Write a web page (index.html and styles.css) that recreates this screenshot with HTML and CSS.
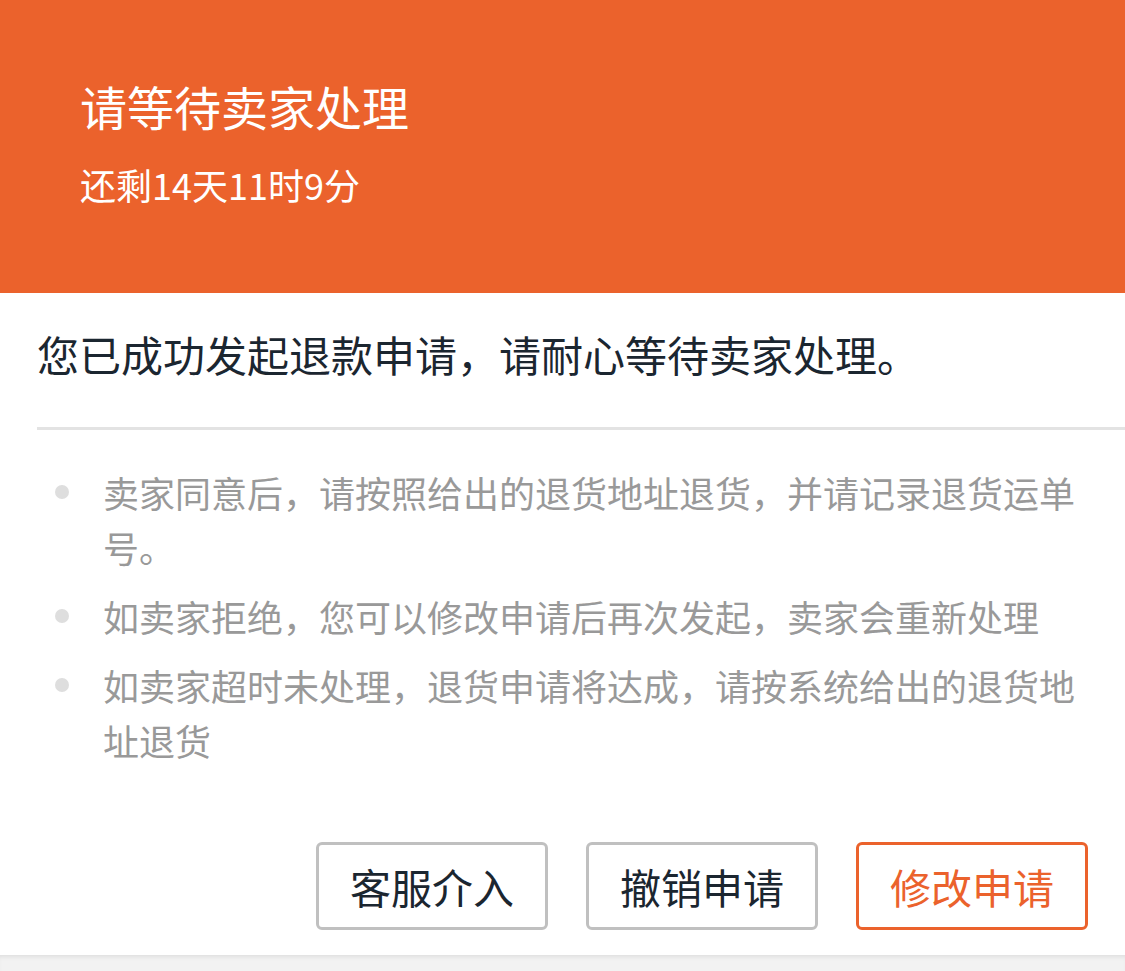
FILE: index.html
```html
<!doctype html>
<html lang="zh-CN">
<head>
 <meta charset="UTF-8">
 <meta name="viewport" content="width=device-width, initial-scale=1.0">
 <title>退款详情</title>
 <link rel="stylesheet" href="styles.css">
</head>
<body>
<div class="page">
 <div class="status">
  <h1 class="status-title">请等待卖家处理</h1>
  <p class="status-time">还剩14天11时9分</p>
 </div>
 <div class="card">
  <p class="card-msg">您已成功发起退款申请，请耐心等待卖家处理。</p>
  <ul class="tips">
   <li>卖家同意后，请按照给出的退货地址退货，并请记录退货运单号。</li>
   <li>如卖家拒绝，您可以修改申请后再次发起，卖家会重新处理</li>
   <li>如卖家超时未处理，退货申请将达成，请按系统给出的退货地址退货</li>
  </ul>
  <div class="actions">
   <a href="#" class="btn">客服介入</a>
   <a href="#" class="btn">撤销申请</a>
   <a href="#" class="btn btn-primary">修改申请</a>
  </div>
 </div>
 <div class="footer"></div>
</div>
</body>
</html>
```

FILE: styles.css
```css
*{
 margin:0;
 padding:0;
 box-sizing:border-box;
}
html,body{
 height:100%;
 overflow:hidden;
}
body{
 font-family:"Noto Sans CJK SC","Noto Sans",sans-serif;
 background:#f2f2f2;
 color:#1b2630;
}
.status{
 height:293px;
 background:#eb622c;
 color:#fff;
 padding:76px 0 0 80px;
}
.status-title{
 font-size:47px;
 font-weight:normal;
 line-height:60px;
}
.status-time{
 margin-top:24px;
 font-size:36px;
 line-height:48px;
}
.card{
 background:#fff;
 padding-left:37px;
}
.card-msg{
 font-size:42px;
 line-height:60px;
 padding:31px 0 43px;
 border-bottom:3px solid #e3e3e3;
}
.tips{
 list-style:none;
 padding:35px 37px 74px 0;
}
.tips li{
 position:relative;
 padding-left:66px;
 font-size:36px;
 line-height:55px;
 color:#999;
 margin-bottom:14px;
}
.tips li:last-child{
 margin-bottom:0;
}
.tips li:before{
 content:'';
 position:absolute;
 left:18px;
 top:20px;
 width:14px;
 height:14px;
 border-radius:50%;
 background:#dedede;
}
.actions{
 display:flex;
 justify-content:flex-end;
 gap:38px;
 padding:0 37px 25px 0;
}
.btn{
 display:flex;
 align-items:center;
 justify-content:center;
 width:232px;
 height:88px;
 border:3px solid #c0c0c0;
 border-radius:6px;
 font-size:41px;
 color:#1b2630;
 text-decoration:none;
}
.btn-primary{
 border-color:#eb622c;
 color:#eb622c;
}
.footer{
 height:20px;
 box-shadow:inset 0 4px 4px -2px rgba(0,0,0,0.08);
}
```
